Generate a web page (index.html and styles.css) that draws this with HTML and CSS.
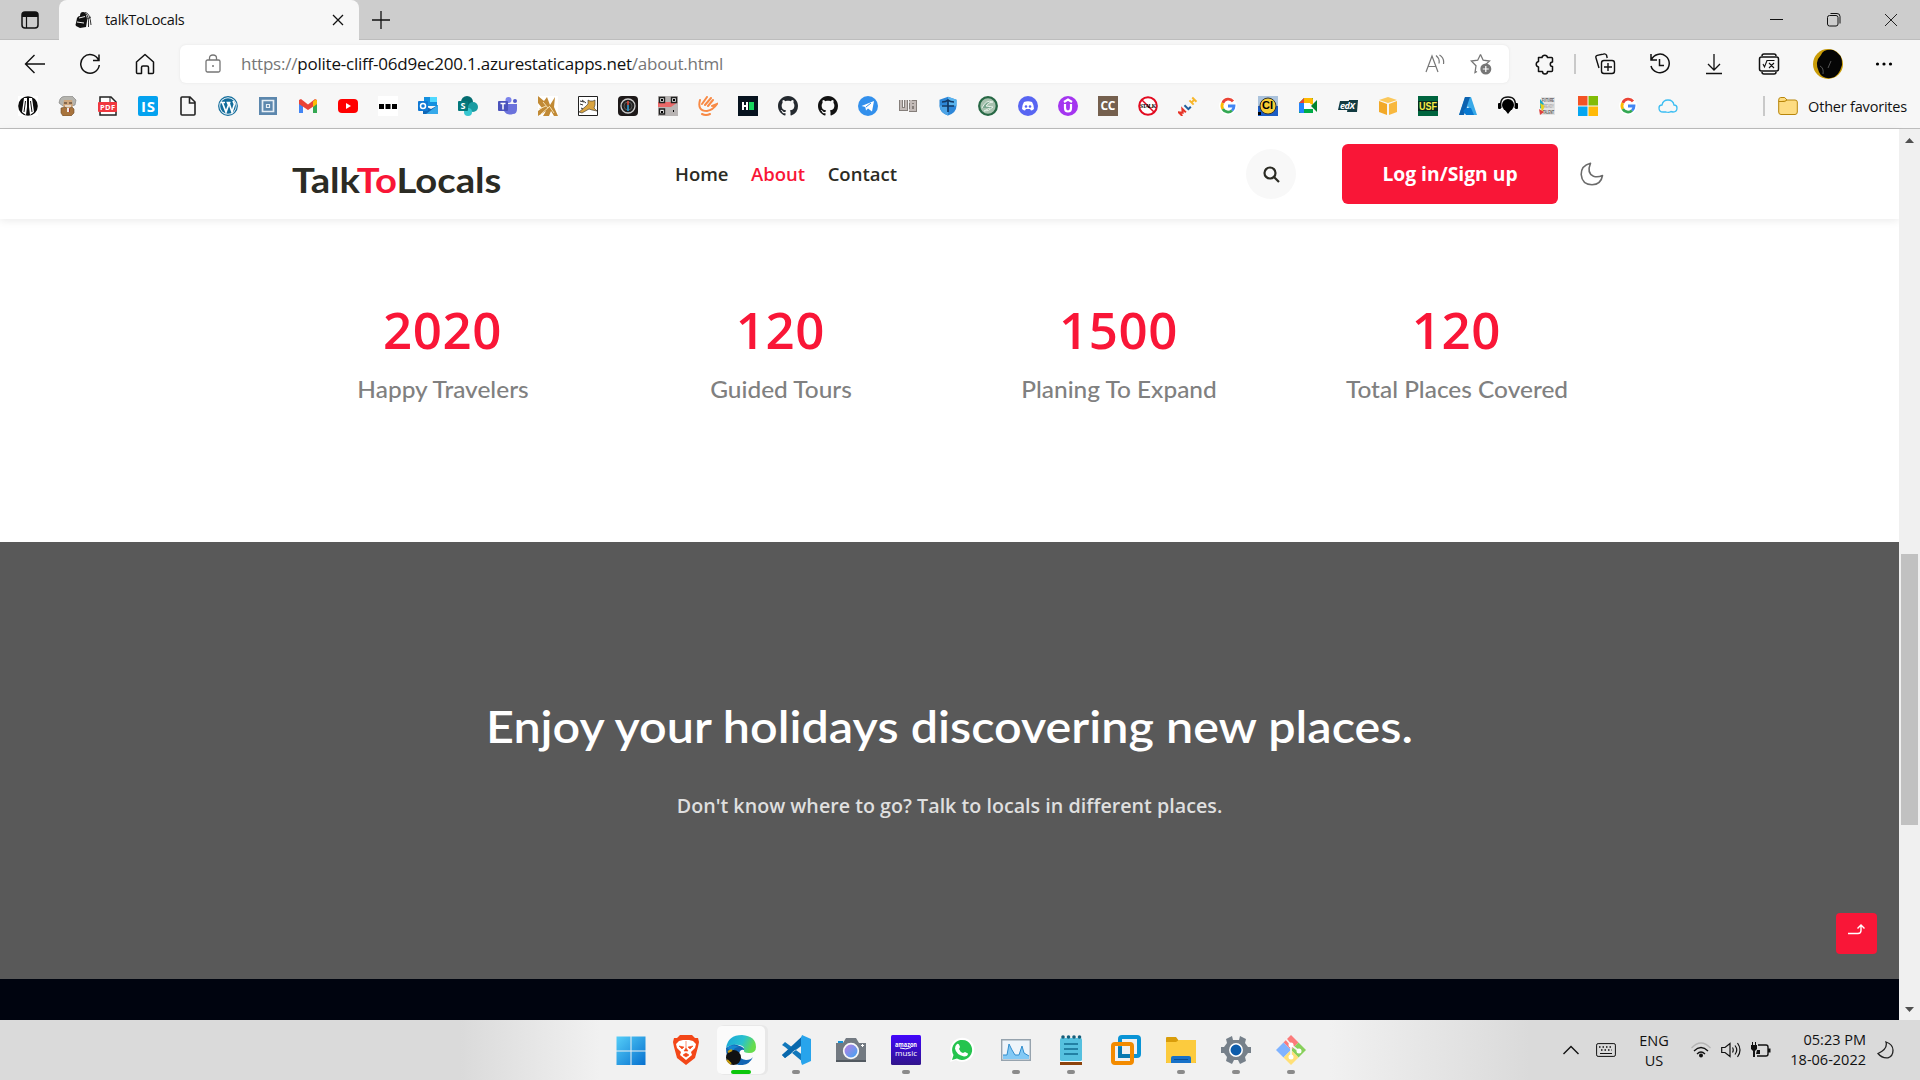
FILE: index.html
```html
<!DOCTYPE html>
<html lang="en">
<head>
<meta charset="utf-8">
<title>talkToLocals</title>
<link rel="stylesheet" href="styles.css">
</head>
<body>
<div class="tabbar">
  <svg class="tab-menu" width="18" height="18" viewBox="0 0 18 18"><rect x="1" y="1" width="16" height="16" rx="3" fill="none" stroke="#111" stroke-width="1.5"/><path d="M1 6V4q0-3 3-3h10q3 0 3 3v2z" fill="#111"/><path d="M5.500 6v11" stroke="#111" stroke-width="1.2"/></svg>
  <div class="tab">
    <svg width="18" height="18" viewBox="0 0 18 18"><path d="M5 5Q5 1 8 1q3 0 3 3 1 2 1 6l-1 6-6 1-4-2q-1-1 0-3l1-5q1-2 3-2z" fill="#111"/><path d="M4 7l6-1.500M2 11l7 1" stroke="#eee"/><path d="M11 3q3 2 2.500 13M10 1.500q5 0 6 12.500M12 8l4-2" fill="none" stroke="#333"/></svg>
    <span class="tab-title">talkToLocals</span>
    <svg width="12" height="12" viewBox="0 0 12 12"><path d="M1 1l10 10M11 1L1 11" stroke="#111" stroke-width="1.3"/></svg>
  </div>
  <svg class="plus" width="18" height="18" viewBox="0 0 18 18"><path d="M9 0v18M0 9h18" stroke="#111" stroke-width="1.3"/></svg>
  <div class="window-buttons">
    <svg width="14" height="14" viewBox="0 0 14 14"><path d="M0 6.500h13" stroke="#111"/></svg>
    <svg width="14" height="14" viewBox="0 0 14 14" fill="none" stroke="#111"><rect x=".5" y="2.500" width="10.500" height="10.500" rx="2"/><path d="M3.500.5H10q3 0 3 3v7"/></svg>
    <svg width="14" height="14" viewBox="0 0 14 14"><path d="M1 1l12 12M13 1L1 13" stroke="#222"/></svg>
  </div>
</div>
<div class="toolbar">
  <div class="nav-buttons">
    <svg width="22" height="22" viewBox="0 0 22 22" fill="none" stroke="#111" stroke-width="1.4"><path d="M21 11H2M10.500 2L1.500 11l9 9"/></svg>
    <svg width="22" height="22" viewBox="0 0 22 22" fill="none" stroke="#111" stroke-width="1.5"><path d="M19.500 7A9.300 9.300 0 1 0 20.300 12M20 1.500V7.500h-6"/></svg>
    <svg width="22" height="22" viewBox="0 0 22 22" fill="none" stroke="#111" stroke-width="1.5" stroke-linejoin="round"><path d="M2.500 9L11 1.500 19.500 9v10.500q0 1-1 1h-4v-6q0-1.500-1.500-1.500h-4q-1.500 0-1.500 1.500v6h-4q-1 0-1-1z"/></svg>
  </div>
  <div class="address">
    <svg width="16" height="20" viewBox="0 0 16 20" fill="none" stroke="#767676" stroke-width="1.300"><rect x="1" y="6" width="14" height="12" rx="1.500"/><path d="M4.500 6V4q0-3 3.500-3t3.500 3v2"/><circle cx="8" cy="12" r="1" fill="#767676" stroke="none"/></svg>
    <div class="url">https://<b>polite-cliff-06d9ec200.1.azurestaticapps.net</b>/about.html</div>
    <svg width="20" height="20" viewBox="0 0 20 20" fill="none" stroke="#767676" stroke-width="1.200"><path d="M1 18L7 2l6 16M3 12.500h8M11 1.500q4 3 3 8M14.500 1q5 3 4 9"/></svg>
    <svg width="22" height="22" viewBox="0 0 22 22"><path d="M10.500 1.500l2.700 5.700 6.300.8-4.700 4.400M7 18.500l-2 1 1-6.700L1.300 8l6.400-.8 2.800-5.700" fill="none" stroke="#767676" stroke-width="1.300"/><circle cx="15.800" cy="16" r="5.500" fill="#767676"/><path d="M15.800 13v6M12.800 16h6" stroke="#fff" stroke-width="1.200"/></svg>
  </div>
  <div class="tools">
    <svg width="22" height="22" viewBox="0 0 22 22" fill="none" stroke="#111" stroke-width="1.500" stroke-linejoin="round"><path d="M4.500 4.500H8a2.800 2.800 0 0 1 5.500 0h4q1 0 1 1V9a2 2 0 0 0 0 4.500v4q0 1-1 1H13.500a2.500 2.500 0 0 1-5 0h-4v-4.500a2.800 2.800 0 0 1 0-5.500z"/></svg>
    <i class="rule"></i>
    <svg width="22" height="22" viewBox="0 0 22 22" fill="none" stroke="#111" stroke-width="1.400"><rect x="7.500" y="7.500" width="13" height="13" rx="2.500"/><path d="M14 10v8M10 14h8M5 15L2 5q-.7-2 1.300-2.600L9.500 1q2-.6 3 1l.7 3"/></svg>
    <svg width="22" height="22" viewBox="0 0 22 22" fill="none" stroke="#111" stroke-width="1.500"><path d="M2 1v6h6M2.300 7A9.300 9.300 0 1 1 2 13M10.500 6v6.500H15"/></svg>
    <svg width="22" height="22" viewBox="0 0 22 22" fill="none" stroke="#111" stroke-width="1.300"><path d="M11 1v16M5 11l6 6 6-6M3 20.500h16"/></svg>
    <svg width="22" height="22" viewBox="0 0 22 22" fill="none" stroke="#111" stroke-width="1.500"><rect x="1.500" y="4" width="19" height="14" rx="2"/><path d="M4 3q0-2 2-2h10q2 0 2 2M4 19q0 2 2 2h10q2 0 2-2"/><path d="M5 11l1.500 3L9 7.500h7.500M11 10l5 5M16 10l-5 5" stroke-width="1.100"/></svg>
    <svg width="30" height="30" viewBox="0 0 30 30"><circle cx="15" cy="15" r="15" fill="#c99c08"/><path d="M8 6q2-6 12-5 10 4 9 15-3 12-11 13-9 1-12-6Q1 13 8 6z" fill="#050505"/><path d="M7 17q4 2 3 8M18 12l-3 7" stroke="#777" fill="none" stroke-width=".7"/></svg>
    <svg width="18" height="6" viewBox="0 0 18 6"><circle cx="2.500" cy="3" r="1.600"/><circle cx="9" cy="3" r="1.600"/><circle cx="15.500" cy="3" r="1.600"/></svg>
  </div>
</div>
<div class="bookmarks">
  <svg viewBox="0 0 20 20"><path fill="#fff" d="M0 0h20v20H0z"/><circle cx="10" cy="10" r="9.800" fill="#0a0a0a"/><path d="M6 2h3v9l-1 8-4-3zM11 2h3l2 14-4 3-1-8z" fill="#fff"/><path d="M7.500 5L6 16M12.500 5L14 16" stroke="#111"/></svg>
  <svg viewBox="0 0 20 20"><path d="M4 1l4-1 6 0 4 4-1 5-3 1H5L1 7l1-4z" fill="#b5b4ae" stroke="#777" stroke-width=".6"/><path d="M6 4h8l1 6-3 3H8l-3-3z" fill="#cfa67c"/><path d="M3 12l4-1 3 2 4-2 2 2v4l-3 3H5l-2-3z" fill="#a8743d" stroke="#6b4a2a" stroke-width=".6"/><path d="M6 7h3M11 7h3" stroke="#3c2a1e" stroke-width="1.200"/><path d="M7 10h6" stroke="#eee" stroke-width="1.300"/><path d="M9 12v4h2v-4" fill="#eee"/><path d="M11.500 13v3" stroke="#b03030"/></svg>
  <svg viewBox="0 0 20 20"><path d="M2 1h11l5 5v13H2z" fill="#fff" stroke="#222" stroke-width="1.500"/><path d="M12 1v6h6" fill="none" stroke="#222"/><rect y="6" width="19" height="10" rx="1" fill="#f0383f"/><text x="2" y="13.500" textLength="15" class="g" font-size="7.500">PDF</text></svg>
  <svg viewBox="0 0 20 20"><rect width="20" height="20" rx="2" fill="#04a2ef"/><text x="3" y="15.500" class="g" font-size="15" textLength="14">IS</text></svg>
  <svg viewBox="0 0 20 20"><path d="M3 2q0-1 1-1h8l5 5v12q0 1-1 1H4q-1 0-1-1zM11.500 1v6H17" fill="none" stroke="#222" stroke-width="1.600"/></svg>
  <svg viewBox="0 0 20 20"><circle cx="10" cy="10" r="9.300" fill="#eef6fa" stroke="#126c9b" stroke-width="1.200"/><circle cx="10" cy="10" r="7.800" fill="#126c9b"/><path d="M3 6.500h4M4.500 7L8 16l2.500-7L9.500 6.500h3M11 7l3 9 2.500-8-1.500-3" stroke="#fff" stroke-width="1.700" fill="none"/></svg>
  <svg viewBox="0 0 20 20"><path fill="#5c87ad" d="M1 1h18v18H1z"/><path d="M4.500 4.500h11v11h-11z" fill="none" stroke="#e6eef5" stroke-width="1.700"/><path d="M8.500 8.500h3v3h-3z" fill="#5c87ad" stroke="#e6eef5" stroke-width="1.200"/></svg>
  <svg viewBox="0 0 20 20"><path d="M1 5v12h4V9z" fill="#4285f4"/><path d="M19 5v12h-4V9z" fill="#34a853"/><path d="M1 4l2-1 7 5.500L17 3l2 1v4l-9 6-9-6z" fill="#ea4335"/><path d="M15 5.500l2.500-2Q19 3.500 19 5v3l-4 3z" fill="#fbbc04"/></svg>
  <svg viewBox="0 0 20 20"><rect y="3" width="20" height="14" rx="4" fill="#f00"/><path d="M8 7l5 3-5 3z" fill="#fff"/></svg>
  <svg viewBox="0 0 20 20"><path fill="#fff" d="M0 0h20v20H0z"/><path d="M1 8h5v5H1zM7.500 8h5v5h-5zM14 8h5v5h-5z"/></svg>
  <svg viewBox="0 0 20 20"><path d="M6 1h13v9H6z" fill="#1490df"/><path d="M12 1h7v5h-7z" fill="#50d9ff"/><path d="M5 9l8 4 7-4v9H5z" fill="#1066b5"/><path d="M20 9v9H8z" fill="#36a9ea"/><rect y="5" width="10" height="10" rx="1" fill="#0f78d4"/><circle cx="5" cy="10" r="2.500" fill="none" stroke="#fff" stroke-width="1.500"/></svg>
  <svg viewBox="0 0 20 20"><circle cx="9" cy="6" r="6" fill="#036c70"/><circle cx="15" cy="11" r="5" fill="#1a9ba1"/><circle cx="10" cy="16" r="4" fill="#37c6d0"/><rect y="5" width="10" height="10" rx="1" fill="#03787c"/><text x="2.500" y="13" class="g" font-size="9">S</text></svg>
  <svg viewBox="0 0 20 20"><circle cx="10.500" cy="4" r="3" fill="#7b83eb"/><circle cx="17" cy="5" r="2" fill="#5059c9"/><path d="M6 8h13v5q0 5-4 5-6 2-9-3z" fill="#6b72dc"/><rect y="5" width="10" height="10" rx="1" fill="#4b53bc"/><path d="M2.500 7.500h5M5 7.500v6" stroke="#fff" stroke-width="1.500"/></svg>
  <svg viewBox="0 0 20 20"><path fill="#fff" d="M0 0h20v20H0z"/><path d="M0 0l6 5 3-4 3 8 5-8-1 10 4 9h-4l-3-5-2 5H5l3-5-8 5v-5l4-3-4-5z" fill="#c18a35"/><path d="M1 13l7-3M3 18l9-8M5 6l5 6M12 11l4 6" stroke="#f6dfae"/></svg>
  <svg viewBox="0 0 20 20"><path d="M.5.500h19v19H.5z" fill="#fff" stroke="#222"/><path d="M10 4l2 1 3 0 2-1v5l-1 3 3 3-5-1-3-1-7 4-3-1 6-5 3-3z" fill="#d9a441" stroke="#333" stroke-width=".6"/><path d="M2 5l4 1M2 8l3 1M4 4l4 3M3 12l2 1" stroke="#333"/></svg>
  <svg viewBox="0 0 20 20"><rect width="20" height="20" rx="4" fill="#1d1919"/><circle cx="10" cy="10" r="7" fill="#222" stroke="#ccc" stroke-width="1.300"/><circle cx="10" cy="10" r="4" fill="none" stroke="#555"/><path d="M10 5v4" stroke="#e54b3b" stroke-width="1.500"/><path d="M10 9v6" stroke="#278ec0" stroke-width="1.800"/></svg>
  <svg viewBox="0 0 20 20"><path fill="#b8b4b3" d="M0 0h20v20H0z"/><path d="M0 6h20l-7 5H0z" fill="#ea6868"/><path d="M1.500 1.500h5v5h-5zM13.500 1.500h5v5h-5zM1.500 13h5v5h-5z" fill="#eee" stroke="#222" stroke-width="1.400"/><path d="M3 3h2v2H3zM15 3h2v2h-2zM3 15h2v2H3zM15 14h1v2h-1z"/></svg>
  <svg viewBox="0 0 20 20" fill="none" stroke="#f88a45" stroke-width="2" stroke-linecap="round"><path d="M2 4Q-1 15 9 15q6-1 10-7l-5 2M4 8l5-7M7 9l6-7M10 10l5-6M4 18q4 2 8 0"/></svg>
  <svg viewBox="0 0 20 20"><path fill="#07131f" d="M0 0h20v20H0z"/><path d="M5 6v8M5 10h4M9 6v8" stroke="#fff" stroke-width="2"/><path fill="#18d65e" d="M11 6h5v8h-5z"/></svg>
  <svg viewBox="0 0 16 16" fill="#24292f"><use href="#github"/></svg>
  <svg viewBox="0 0 16 16" fill="#111"><path id="github" d="M8 0C3.580 0 0 3.580 0 8c0 3.540 2.290 6.530 5.470 7.590.4.070.55-.17.550-.38 0-.19-.01-.82-.01-1.490-2.010.37-2.530-.49-2.690-.94-.09-.23-.48-.94-.82-1.130-.28-.15-.68-.52-.01-.53.630-.01 1.080.58 1.230.82.720 1.210 1.870.87 2.330.66.070-.52.280-.87.510-1.070-1.780-.2-3.640-.89-3.640-3.950 0-.87.310-1.590.82-2.150-.08-.2-.36-1.020.08-2.120 0 0 .67-.21 2.200.82.640-.18 1.320-.27 2-.27s1.360.09 2 .27c1.530-1.040 2.200-.82 2.200-.82.440 1.100.16 1.920.08 2.120.51.560.82 1.270.82 2.150 0 3.070-1.870 3.750-3.650 3.950.29.250.54.730.54 1.480 0 1.070-.01 1.930-.01 2.200 0 .21.150.46.550.38A8 8 0 0 0 16 8c0-4.420-3.580-8-8-8z"/></svg>
  <svg viewBox="0 0 20 20"><circle cx="10" cy="10" r="10" fill="#3390ec"/><path d="M3.500 10L16 5l-2 10.500-4-3-2 2-.7-3.500z" fill="#fff"/><path d="M8 11l5-4" stroke="#3390ec"/></svg>
  <svg viewBox="0 0 20 20" fill="none"><g stroke="#857e7a" stroke-width="4"><path d="M3 4v9h5V4M13 4v11M11 6h6v3h-5M17 9v5h-6"/></g><g stroke="#c2bab7" stroke-width="2"><path d="M3 4v9h5V4M13 4v11M11 6h6v3h-5M17 9v5h-6"/></g></svg>
  <svg viewBox="0 0 20 20"><path d="M10 .7l8.500 3v6q0 7-8.500 9.800-8.500-3-8.500-9.800v-6z" fill="#2d87d8"/><path d="M10 .7l8.500 3v6H10z" fill="#5ab4ee"/><path d="M1.500 9.500H10v10q-8-3-8.500-10z" fill="#4da4e6"/><path d="M10 4v12M4 10h12M4 6q4 0 6-2 2 2 6 2" stroke="#123864" stroke-width="1.700" fill="none"/></svg>
  <svg viewBox="0 0 20 20"><circle cx="10" cy="10" r="8.800" fill="#a8c2af" stroke="#276845" stroke-width="2.300"/><path d="M4 12q4-9 11-6-5 0-7 4l7 1q-5 5-9 4l6-3" fill="#78a68d" stroke="#e8f2ea"/></svg>
  <svg viewBox="0 0 20 20"><circle cx="10" cy="10" r="10" fill="#5865f2"/><path d="M6 6q4-1.500 8 0 2 3 2 7-2 1.500-3 1.500l-1-1.500H8l-1 1.500q-1 0-3-1.500 0-4 2-7z" fill="#fff"/><circle cx="8" cy="10.500" r="1.300" fill="#5865f2"/><circle cx="12" cy="10.500" r="1.300" fill="#5865f2"/></svg>
  <svg viewBox="0 0 20 20" fill="none" stroke="#fff" stroke-width="2.200"><circle cx="10" cy="10" r="10" fill="#a435f0" stroke="none"/><path d="M6 6l4-2.500L14 6M7 8v4q0 3.500 3 3.500t3-3.500V8"/></svg>
  <svg viewBox="0 0 20 20"><path fill="#75604e" d="M0 0h20v20H0z"/><text x="2.500" y="14" class="g" font-size="12" textLength="15">CC</text></svg>
  <svg viewBox="0 0 20 20"><circle cx="10" cy="10" r="8.800" fill="#fff" stroke="#e20b20" stroke-width="2"/><path d="M4 4l12 12" stroke="#e20b20" stroke-width="1.500"/><text x="2" y="12" font-size="5.500" font-weight="700" font-family="Liberation Serif" textLength="16">STALK</text></svg>
  <svg viewBox="0 0 20 20" fill="none" stroke-width="2"><g transform="rotate(-45 10 10)"><path d="M-1 13V8l2.500 3L4 8v5" stroke="#e73427"/><path d="M8 7v5.500h3.500" stroke="#205f9d"/><path d="M15 7v6M15 10h4M19 7v6" stroke="#f8b72c"/></g></svg>
  <svg viewBox="0 0 20 20"><g id="google"><circle cx="10" cy="10" r="9" fill="#fff"/><g fill="none" stroke-width="2.800"><path d="M15 5.300A6 6 0 0 0 4.800 7" stroke="#ea4335"/><path d="M4.800 7A6 6 0 0 0 4.800 13" stroke="#fbbc05"/><path d="M4.800 13A6 6 0 0 0 14 14.500" stroke="#34a853"/><path d="M14 14.500A6 6 0 0 0 16 10H10" stroke="#4285f4"/></g></g></svg>
  <svg viewBox="0 0 20 20"><path fill="#abc3dc" d="M0 0h20v20H0z"/><path fill="#1b5cc4" d="M0 10h20v10H0z"/><circle cx="10" cy="10" r="8" fill="#f7cf35" stroke="#333"/><text x="4" y="13" font-size="11" font-weight="700" font-family="Liberation Sans" textLength="11">CI</text><path d="M0 16h3v3H0z"/></svg>
  <svg viewBox="0 0 20 20"><path d="M1 7l5-5h9v5H6v6h9v4H1z" fill="#00ac47"/><path d="M6 2h8q1 0 1 2v5l-4-2H6z" fill="#ffba00"/><path d="M1 7l5-5v5z" fill="#ea4335"/><path d="M1 7h5v10H3q-2 0-2-2z" fill="#2684fc"/><path fill="#fff" d="M6 7h6v6H6z"/><path d="M13 10l6-6v12z" fill="#00832d"/></svg>
  <svg viewBox="0 0 20 20"><path d="M2 5h9l-1 9H0zM11 4h9l-1 12H9z" fill="#123b41"/><text x="2" y="13" class="g" font-size="9" font-style="italic" textLength="15">edX</text></svg>
  <svg viewBox="0 0 20 20"><path d="M1 4l9-3 9 3-9 3z" fill="#fbc85b"/><path d="M1 5l8 3v11l-8-3z" fill="#f2a928"/><path d="M19 5l-8 3v11l8-3z" fill="#f8b83e"/></svg>
  <svg viewBox="0 0 20 20"><path fill="#00653f" d="M0 0h20v20H0z"/><path d="M0 5h20v10H0z" fill="#072b20"/><text x="1" y="14" font-size="11" fill="#f8ed46" font-family="Liberation Sans" font-weight="700" textLength="18" lengthAdjust="spacingAndGlyphs">USF</text></svg>
  <svg viewBox="0 0 20 20"><path d="M7 1h6l6 18h-6l-3-9-5 9H1z" fill="#39a9e8"/><path d="M7 1h5L6 19H1z" fill="#0d62af"/><path d="M8 12h5l3 7H8l-3-4z" fill="#0878d0"/></svg>
  <svg viewBox="0 0 20 20"><circle cx="10" cy="9" r="6" /><path d="M3 12Q1 1 10 1t7 11" fill="none" stroke="#111" stroke-width="1.500"/><rect x="0" y="7" width="3" height="6" rx="1"/><rect x="17" y="7" width="3" height="6" rx="1"/><path d="M7 14h6l-3 4z"/></svg>
  <svg viewBox="0 0 20 20"><path fill="#e2e2e2" d="M3 1h14v18H3z"/><path d="M2 3l4 5-4 5z" fill="#1aa7ca"/><path d="M2 7l5 3-3 6z" fill="#e6d21b"/><path d="M1 13l5 3-4 3z" fill="#df403d"/><g font-size="5" font-family="Liberation Sans" font-weight="700" fill="#555"><text x="4" y="6" textLength="12" lengthAdjust="spacingAndGlyphs">FUTURE</text><text x="6" y="12" textLength="10" lengthAdjust="spacingAndGlyphs" fill="#aaa">READY</text><text x="5" y="17.500" textLength="11" lengthAdjust="spacingAndGlyphs">TALENT</text></g></svg>
  <svg viewBox="0 0 20 20"><path fill="#f35325" d="M0 0h9.500v9.500H0z"/><path fill="#81bc06" d="M10.500 0H20v9.500h-9.500z"/><path fill="#05a6f0" d="M0 10.500h9.500V20H0z"/><path fill="#ffba08" d="M10.500 10.500H20V20h-9.500z"/></svg>
  <svg viewBox="0 0 20 20"><use href="#google"/></svg>
  <svg viewBox="0 0 20 20"><path d="M5 16q-4 0-4-4 0-3 3-3Q5 4 10 4t6 5q3 0 3 3 0 4-4 4l-2-.5q-2 1.500-5 .5z" fill="none" stroke="#3bbdf2" stroke-width="1.300"/></svg>
  <div class="others"><i class="rule"></i>
    <svg viewBox="0 0 20 20"><path d="M.7 4q0-2.500 2-2.500h4L9 4h8q2.300 0 2.300 2v10q0 2.500-2.300 2.500H3Q.7 18.500.7 16z" fill="#fddc82" stroke="#b8860b"/><path d="M.7 5.500h6L9 4" fill="#edb92e" stroke="#b8860b"/></svg>
    <span>Other favorites</span></div>
</div>
<div class="viewport">
  <main>
    <header>
      <a class="logo"><span>Talk<em>To</em>Locals</span></a>
      <nav><a>Home</a><a class="on">About</a><a>Contact</a></nav>
      <div class="search"><svg width="17" height="17" viewBox="0 0 17 17" fill="none" stroke="#2b2b24" stroke-width="2.200"><circle cx="7" cy="7" r="5.500"/><path d="M11 11l5 5"/></svg></div>
      <a class="login">Log in/Sign up</a>
      <svg class="moon" width="24" height="24" viewBox="0 0 24 24"><path d="M10.500 1.200Q6.500 11 13.500 14.200q4 1.500 9-.7-1.500 9-10.500 9.300Q2 22.500 1.200 12.500 1 3.500 10.500 1.200z" fill="none" stroke="#6b6b6b" stroke-width="1.600" stroke-linejoin="round"/></svg>
    </header>
    <section class="stats">
      <div><strong>2020</strong><p>Happy Travelers</p></div>
      <div><strong>120</strong><p>Guided Tours</p></div>
      <div><strong>1500</strong><p>Planing To Expand</p></div>
      <div><strong>120</strong><p>Total Places Covered</p></div>
    </section>
    <section class="banner">
      <h1>Enjoy your holidays discovering new places.</h1>
      <p>Don't know where to go? Talk to locals in different places.</p>
      <a class="top"><svg width="17" height="11" viewBox="0 0 17 11" fill="none" stroke="#fff" stroke-width="1.400"><path d="M0 9.500h10q3 0 3-3V1M9.500 4.500L13 1l3.500 3.500"/></svg></a>
    </section>
    <footer></footer>
  </main>
  <div class="scrollbar"><svg width="9" height="5" viewBox="0 0 9 5"><path d="M0 5l4.500-5L9 5z" fill="#505050"/></svg><i></i><svg width="9" height="5" viewBox="0 0 9 5"><path d="M0 0l4.500 5L9 0z" fill="#505050"/></svg></div>
</div>
<div class="taskbar">
  <div class="apps">
    <a><svg viewBox="0 0 30 30"><linearGradient id="win" x2="1" y2="1"><stop stop-color="#55cef8"/><stop offset="1" stop-color="#0670cf"/></linearGradient><path d="M.5 1.500h14v14h-14zM15.500 1.500h14v14h-14zM.5 16.500h14V30h-14zM15.500 16.500h14V30h-14z" fill="url(#win)"/></svg></a>
    <a><svg viewBox="0 0 30 30"><path d="M9 0h12l3 3 3 0 1 4-1 5-3 11-9 7-9-7-3-11-1-5 1-4 3 0z" fill="#f34718"/><path d="M8 6l4-1h6l4 1 3 3-1 4-4 4 1 3-6 5-6-5 1-3-4-4-1-4z" fill="#fff"/><path d="M8 11l5 1-2 2zM22 11l-5 1 2 2zM12 20l3-2 3 2-3 2zM15 6v7l-2 3h4l-2-3" fill="#f34718" stroke="#f34718" stroke-width=".6"/></svg></a>
    <a class="active"><svg viewBox="0 0 30 30"><linearGradient id="edge" x2="1" y2=".3"><stop stop-color="#18a5d9"/><stop offset=".6" stop-color="#29c1cf"/><stop offset="1" stop-color="#66dc4c"/></linearGradient><path d="M0 13Q2 0 16 0q14 1 14 12 0 6-7 6-6 0-5-3 1-4-5-5-8-1-13 3z" fill="url(#edge)"/><path d="M0 13Q7 7 14 11q5 2 4 4-4-1-5 4 0 5 7 6 5 0 7-3-4 9-14 8Q0 28 0 13z" fill="#1265b4"/><path d="M1 13q5-5 12-1-6 0-6 6z" fill="#1687d0"/><circle cx="7.500" cy="22.500" r="7.500" fill="#111"/><path d="M2 17l4-2M1 25l4 4" stroke="#c69c10" stroke-width="2"/></svg></a>
    <a class="run"><svg viewBox="0 0 30 30"><path d="M1 10l3-3 19 14v7L4 12zM1 20l3 3L23 9V2L1 20z" fill="#1178bc"/><path d="M1 20L22 .5v8L4 23z" fill="#0868ad"/><path d="M21 0l9 4v22l-9 4-1-3V3z" fill="#28a4ec"/></svg></a>
    <a><svg viewBox="0 0 30 30"><path d="M2 6h5v4H2z" fill="#1493d8"/><path d="M0 8h7l3-5h10l3 5h7v19H0z" fill="#737a82"/><path d="M0 25h30v2H0z" fill="#525960"/><linearGradient id="lens" x2="1" y2="1"><stop stop-color="#c57ae0"/><stop offset="1" stop-color="#36a9f5"/></linearGradient><circle cx="15" cy="16" r="7.300" fill="url(#lens)" stroke="#f8f8f8" stroke-width="1.700"/><path d="M25 10.500h3M26.500 9v3" stroke="#fff"/></svg></a>
    <a class="run"><svg viewBox="0 0 30 30"><linearGradient id="am" x2="0" y2="1"><stop stop-color="#4206fc"/><stop offset="1" stop-color="#31158c"/></linearGradient><rect width="30" height="30" rx="1.500" fill="url(#am)"/><g fill="#fff" font-family="Open Sans" font-size="7"><text x="4" y="12" font-weight="700" textLength="22" lengthAdjust="spacingAndGlyphs">amazon</text><text x="4" y="21" font-size="8" textLength="22" lengthAdjust="spacingAndGlyphs">music</text></g><path d="M9 13q6 2 11-.5" stroke="#fff" fill="none"/></svg></a>
    <a><svg viewBox="0 0 30 30"><path d="M4 27l2-6a12 12 0 1 1 4 4z" fill="#fff"/><path d="M6 25l1.500-5a10 10 0 1 1 3.500 3.500z" fill="#25c44e"/><path d="M11 9q2-1 3 3l-1 2q1 3 4 4l2-1 3 1.500q0 3-4 3-8-2-9-8 0-3 2-4.500z" fill="#fff"/></svg></a>
    <a class="run"><svg viewBox="0 0 30 30"><path d="M.7 4.700h28.600v20.600H.7z" fill="#eef4fa" stroke="#96a3ae" stroke-width="1.400"/><path d="M2 20l4 0 2-11 3 6 3 5h4l3-9 2 7 5 3v3H2z" fill="#83c9f5"/><path d="M2 20l4 0 2-11 3 6 3 5h4l3-9 2 7 5 3" fill="none" stroke="#328ece"/></svg></a>
    <a class="run"><svg viewBox="0 0 30 30"><path d="M4 26h22v4H4z" fill="#8d430c"/><path d="M4 24h22v3H4z" fill="#fff"/><rect x="4" y="3" width="22" height="23" rx="1.500" fill="#55c0df"/><path d="M8 9h14M8 14h14M8 19h14" stroke="#126b91" stroke-width="1.600"/><g fill="#155e7b"><circle cx="7" cy="2" r="1.800"/><circle cx="12.500" cy="2" r="1.800"/><circle cx="18" cy="2" r="1.800"/><circle cx="23.500" cy="2" r="1.800"/></g></svg></a>
    <a><svg viewBox="0 0 30 30" fill="none" stroke-width="4"><rect x="9" y="2" width="19" height="19" rx="2" stroke="#0a94d6"/><rect x="2" y="9" width="19" height="19" rx="2" stroke="#f38b00"/><path d="M9 12v9h10" stroke="#0879b1"/></svg></a>
    <a class="run"><svg viewBox="0 0 30 30"><path d="M0 3q0-1 1-1h9l3 4h17v22H0z" fill="#d99d0b"/><path d="M0 7h10l3-2h17v22q0 1-1 1H1q-1 0-1-1z" fill="#fccb3e"/><path d="M5 28v-5q0-2 2-2h16q2 0 2 2v5z" fill="#1771c8"/><path d="M8 24.500h14" stroke="#0a4e94"/></svg></a>
    <a class="run"><svg viewBox="0 0 30 30"><path d="M11 1l1 4h6l1-4 6 3-1 4 3 4h3v6h-3l-3 4 1 4-6 3-2-4h-4l-2 4-6-3 1-4-3-4H0v-6h3l3-4-1-4z" fill="#76808a"/><circle cx="15" cy="15" r="6.200" fill="#0d5cab" stroke="#fff" stroke-width="1.500"/></svg></a>
    <a class="run"><svg viewBox="0 0 30 30"><path d="M15 0l7.500 7.500-7.500 7.500-7.500-7.500z" fill="#fb7b7b"/><path d="M7.500 7.500L15 15l-7.500 7.500L0 15z" fill="#80b3ff"/><path d="M22.500 7.500L30 15l-7.500 7.500L15 15z" fill="#87d05b"/><path d="M15 15l7.500 7.500L15 30l-7.500-7.500z" fill="#ffe078"/><path d="M10 4l5 6v12M15 10l8 6" stroke="#f4f4f4" stroke-width="1.800" fill="none"/><g fill="#fff"><circle cx="15" cy="10" r="2.500"/><circle cx="23" cy="16" r="2.500"/><circle cx="15" cy="22" r="2.500"/></g></svg></a>
  </div>
  <div class="tray">
    <svg width="16" height="10" viewBox="0 0 16 10"><path d="M.5 9L8 1.500 15.500 9" fill="none" stroke="#111" stroke-width="1.400"/></svg>
    <svg width="20" height="14" viewBox="0 0 20 14" fill="none" stroke="#111"><rect x=".6" y=".6" width="18.800" height="12.800" rx="1.500"/><path d="M3 4h14M5 7h11" stroke-dasharray="1.500 2" stroke-width="1.500"/><path d="M4 10.500h12"/></svg>
    <div class="lang"><span>ENG</span><span>US</span></div>
    <div class="status">
    <svg width="20" height="16" viewBox="0 0 20 16" fill="none" stroke="#111" stroke-width="1.300"><path d="M.5 6q9.500-10 19 0" stroke="#b5b5b5"/><path d="M3 9q7-7 14 0M6 12q4-4 8 0"/><circle cx="10" cy="13.500" r="2" fill="#111" stroke="none"/></svg>
    <svg width="20" height="16" viewBox="0 0 20 16" fill="none" stroke="#111" stroke-width="1.200"><path d="M.7 5.500H4L9 1.500v13L4 10.500H.7zM11.500 5.500q1.500 2.500 0 5M14 3.500q3.500 4.500 0 9M16.500 1q5 7 0 14"/></svg>
    <svg width="20" height="16" viewBox="0 0 20 16"><path d="M7 3h8q2 0 2 2v7q0 2-2 2H6" fill="none" stroke="#111" stroke-width="1.400"/><path d="M0 3h6v4L4 9v6H2V9L0 7zM1 0h1v3H1zM4 0h1v3H4zM17 6.500h2.500v4H17zM6 8h3v4H5z" fill="#111"/></svg>
    </div>
    <div class="clock"><span>05:23 PM</span><span>18-06-2022</span></div>
    <svg width="17" height="18" viewBox="0 0 17 18"><path d="M9 1Q11 8 1 12.500q4 5 10 4.300 5-1.500 5-7.500T9 1z" fill="none" stroke="#222" stroke-width="1.300"/></svg>
  </div>
</div>
</body>
</html>
```
FILE: styles.css
```css
* { box-sizing: border-box; }
body { margin: 0; width: 1920px; height: 1080px; overflow: hidden; display: flex; flex-direction: column; background: #f7f7f7; font-family: "Open Sans", sans-serif; }
svg { display: block; flex: none; }
.g { fill: #fff; font-family: "Open Sans", sans-serif; font-weight: 700; }
.rule { width: 2px; height: 20px; background: #c9c9c9; }

.tabbar { height: 40px; flex: none; display: flex; align-items: center; background: #cdcdcd; box-shadow: inset 0 -1px #bdbdbd; }
.tab-menu { margin-left: 21px; }
.tab { width: 300px; height: 40px; margin-left: 20px; padding: 0 15px 0 16px; display: flex; align-items: center; background: #f7f7f7; border-radius: 8px 8px 0 0; }
.tab-title { flex: 1; padding: 0 0 1px 12px; font-size: 14.500px; letter-spacing: -.3px; color: #111; }
.plus { margin-left: 13px; }
.window-buttons { margin-left: auto; margin-right: 22px; display: flex; gap: 43px; }

.toolbar { height: 48px; flex: none; display: flex; align-items: center; }
.nav-buttons { width: 180px; display: flex; gap: 33px; padding-left: 24px; }
.address { width: 1329px; height: 38px; padding: 0 17px 0 25px; display: flex; align-items: center; background: #fff; border-radius: 6px; box-shadow: 0 0 3px #e5e5e5; }
.address svg + svg { margin-left: 25px; }
.url { flex: 1; padding: 0 0 1px 20px; font-size: 17px; letter-spacing: -.22px; color: #767676; white-space: nowrap; }
.url b { font-weight: 400; color: #111; }
.tools { display: flex; align-items: center; margin-left: 25px; flex: 1; }
.tools .rule { margin: 0 18px; }
.tools svg + svg { margin-left: 32.700px; }

.bookmarks { height: 41px; flex: none; display: flex; align-items: center; gap: 20px; padding: 0 13px 4px 18px; border-bottom: 1px solid #bdbdbd; }
.bookmarks svg { width: 20px; height: 20px; }
.others { margin-left: auto; display: flex; align-items: center; font-size: 14.500px; letter-spacing: -.2px; color: #111; }
.others svg { margin: 0 10px 0 13px; }

.viewport { height: 891px; flex: none; display: flex; }
main { width: 1899px; background: #fff; display: flex; flex-direction: column; }
header { height: 90px; flex: none; display: flex; align-items: center; padding-left: 292px; box-shadow: 0 2px 8px rgba(0,0,0,.08); color: #2b2b24; }
.logo { width: 383px; font: 700 34px/40px Lato, sans-serif; padding-top: 11px; }
.logo span { display: inline-block; transform: scaleX(1.124); transform-origin: left; }
.logo em { font-style: normal; color: #f91637; }
nav { width: 571px; display: flex; gap: 22.500px; padding-bottom: 2px; font-size: 18.500px; font-weight: 600; }
nav .on { color: #f91637; }
.search { width: 50px; height: 50px; border-radius: 50%; background: #f8f8f8; display: grid; place-items: center; }
.login { width: 216px; height: 60px; margin-left: 46px; padding-bottom: 1px; border-radius: 6px; background: #f91637; color: #fff; display: grid; place-items: center; font-size: 19.300px; font-weight: 700; }
.moon { margin-left: 22px; }
.stats { height: 323px; flex: none; width: 1352px; margin: 0 auto; padding-top: 75px; display: grid; grid-template-columns: repeat(4, 1fr); text-align: center; }
.stats strong { font-size: 51px; line-height: 70px; font-weight: 650; letter-spacing: .6px; color: #f91637; }
.stats p { margin: 9px 0 0; font: 500 23px/32px Lato, sans-serif; color: #808080; transform: scaleX(1.062); }
.banner { position: relative; height: 437px; flex: none; background: #595959; text-align: center; padding-top: 154px; color: #fff; }
.banner h1 { margin: 0; font: 600 44px/60px Lato, sans-serif; transform: scaleX(1.102); }
.banner p { margin: 35px 0 0; font-size: 19.700px; line-height: 30px; font-weight: 600; color: #dfdfdf; }
.top { position: absolute; right: 22px; bottom: 25px; width: 41px; height: 41px; border-radius: 4px; background: #f91637; display: flex; justify-content: center; padding-top: 11px; }
footer { flex: 1; background: #00040f; }
.scrollbar { flex: 1; background: #f0f0f0; display: flex; flex-direction: column; align-items: center; padding: 9px 0 8px; }
.scrollbar i { width: 17px; height: 271px; margin: 411px 0 auto; background: #c1c1c1; }

.taskbar { height: 60px; flex: none; display: flex; align-items: center; justify-content: space-between; background: linear-gradient(90deg, #dadada 460px, #f1f1f1 600px, #f1f1f1 1330px, #dadada 1530px); }
.apps { display: flex; gap: 7px; margin-left: 607px; }
.apps a { width: 48px; height: 48px; display: grid; justify-items: center; align-content: start; padding-top: 9px; gap: 5px; }
.apps svg { width: 30px; height: 30px; }
.apps .run::after { content: ""; width: 8px; height: 4px; border-radius: 2px; background: #8a8a8a; }
.apps .active { background: #fbfbfb; border-radius: 5px; box-shadow: 2px 0 0 1px #e8e8e8; }
.apps .active::after { content: ""; width: 20px; height: 4px; border-radius: 2px; background: #0ac60a; }
.tray { display: flex; align-items: center; color: #111; font-size: 14.500px; line-height: 20px; padding-right: 26px; }
.tray > svg + svg { margin-left: 17px; }
.lang { display: flex; flex-direction: column; align-items: center; width: 30px; margin-left: 23px; padding-top: 1px; }
.status { display: flex; gap: 10px; margin-left: 22px; }
.clock { display: flex; flex-direction: column; align-items: flex-end; width: 95px; margin-right: 11px; }
```
